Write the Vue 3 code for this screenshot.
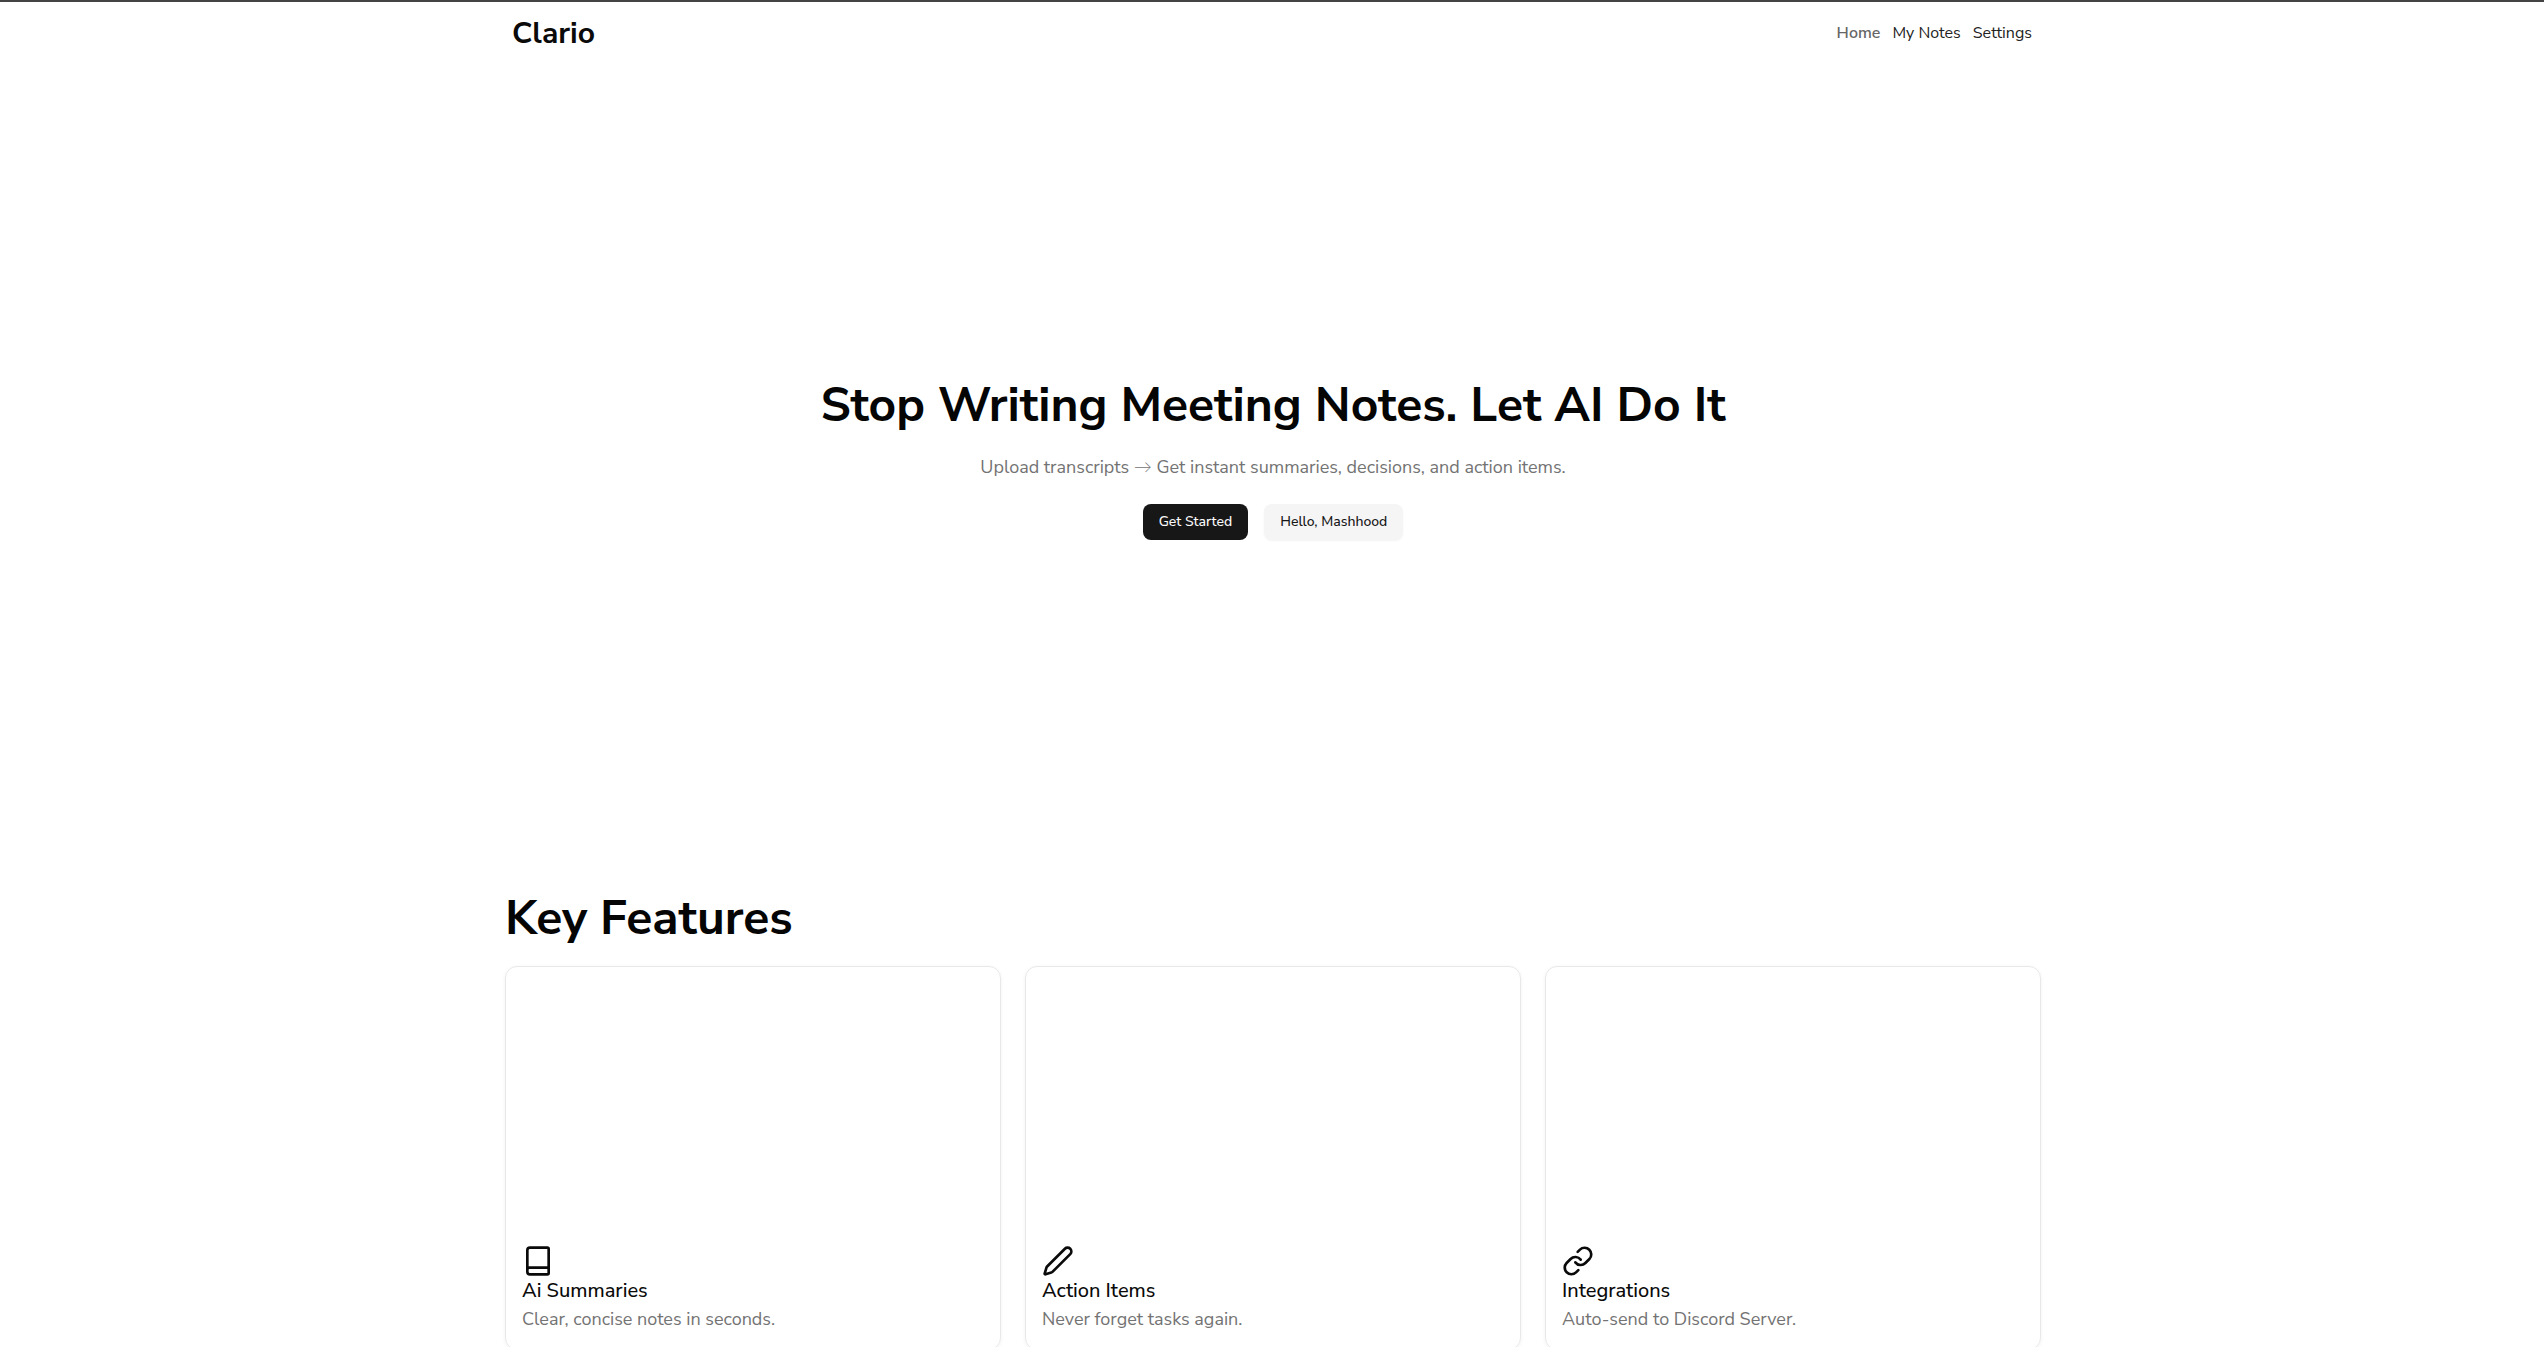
<template>
  <div class="page">
    <header class="topbar">
      <div class="topbar-inner">
        <div class="brand">Clario</div>
        <nav class="nav">
          <a v-for="link in links" :key="link.label" class="nav-link" :class="{ active: link.active }">{{ link.label }}</a>
        </nav>
      </div>
    </header>

    <section class="hero">
      <h1>Stop Writing Meeting Notes. Let AI Do It</h1>
      <p>Upload transcripts <span class="arrow">→</span> Get instant summaries, decisions, and action items.</p>
      <div class="hero-actions">
        <button class="btn primary">Get Started</button>
        <button class="btn secondary">Hello, Mashhood</button>
      </div>
    </section>

    <section class="features">
      <h2>Key Features</h2>
      <div class="feature-grid">
        <div v-for="f in features" :key="f.title" class="card">
          <svg class="card-icon" viewBox="0 0 24 24" fill="none" stroke="currentColor" stroke-width="2" stroke-linecap="round" stroke-linejoin="round">
            <path v-for="d in f.paths" :key="d" :d="d" />
          </svg>
          <h3>{{ f.title }}</h3>
          <p>{{ f.text }}</p>
        </div>
      </div>
    </section>
  </div>
</template>

<script setup>
const links = [
  { label: 'Home', active: true },
  { label: 'My Notes' },
  { label: 'Settings' },
];

const features = [
  {
    title: 'Ai Summaries',
    text: 'Clear, concise notes in seconds.',
    paths: ['M4 19V4a2 2 0 0 1 2-2h13a1 1 0 0 1 1 1v18a1 1 0 0 1-1 1H6a2 2 0 0 1-2-2v-1.5a1.5 1.5 0 0 1 1.5-1.5H20'],
  },
  {
    title: 'Action Items',
    text: 'Never forget tasks again.',
    paths: ['M21.174 6.812a1 1 0 0 0-3.986-3.987L3.842 16.174a2 2 0 0 0-.5.83l-1.321 4.352a.5.5 0 0 0 .623.622l4.353-1.32a2 2 0 0 0 .83-.497z'],
  },
  {
    title: 'Integrations',
    text: 'Auto-send to Discord Server.',
    paths: [
      'M10 13a5 5 0 0 0 7.54.54l3-3a5 5 0 0 0-7.07-7.07l-1.72 1.71',
      'M14 11a5 5 0 0 0-7.54-.54l-3 3a5 5 0 0 0 7.07 7.07l1.71-1.71',
    ],
  },
];
</script>

<style scoped>
.page {
  font-family: "Nunito Sans", Lato, "Noto Sans", sans-serif;
  color: #0d0d0d;
  background: #fff;
  padding-left: 2px;
}

.topbar {
  border-top: 2px solid #444;
  margin-left: -2px;
}

.topbar-inner {
  width: 1536px;
  margin: 0 auto;
  height: 62px;
  padding: 0 8px;
  box-sizing: border-box;
  display: flex;
  align-items: center;
  justify-content: space-between;
}

.brand {
  font-size: 30px;
  font-weight: 700;
  color: #0a0a0a;
}

.nav {
  display: flex;
  gap: 12px;
}

.nav-link {
  font-size: 16px;
  color: #222;
}

.nav-link.active {
  color: #666;
  font-weight: 600;
}

.hero {
  height: 784px;
  box-sizing: border-box;
  padding-top: 2px;
  display: flex;
  flex-direction: column;
  align-items: center;
  justify-content: center;
  text-align: center;
}

.hero h1 {
  margin: 0;
  font-size: 48px;
  line-height: 60px;
  font-weight: 700;
  color: #050505;
}

.hero p {
  margin: 18px 0 0;
  font-size: 18px;
  line-height: 28px;
  color: #737373;
}

.arrow {
  font-weight: 300;
}

.hero-actions {
  display: flex;
  gap: 16px;
  margin-top: 23px;
}

.btn {
  font: inherit;
  font-size: 14px;
  font-weight: 500;
  border: 0;
  border-radius: 8px;
  height: 36px;
  padding: 0 16px;
}

.btn.primary {
  background: #171717;
  color: #fafafa;
}

.btn.secondary {
  background: #f5f5f5;
  color: #171717;
  box-shadow: 0 1px 2px rgba(0, 0, 0, 0.05);
}

.features {
  width: 1536px;
  margin: 0 auto;
  padding-top: 46px;
}

.features h2 {
  margin: 0 0 24px;
  font-size: 48px;
  line-height: 48px;
  font-weight: 700;
  color: #050505;
}

.feature-grid {
  display: grid;
  grid-template-columns: repeat(3, 1fr);
  gap: 24px;
}

.card {
  height: 384px;
  box-sizing: border-box;
  padding: 16px;
  border: 1px solid #e8e8e8;
  border-radius: 12px;
  box-shadow: 0 1px 4px rgba(0, 0, 0, 0.05);
  display: flex;
  flex-direction: column;
  justify-content: flex-end;
}

.card-icon {
  width: 32px;
  height: 32px;
  color: #0a0a0a;
}

.card h3 {
  margin: 0;
  font-size: 20px;
  line-height: 28px;
  font-weight: 500;
  color: #0a0a0a;
}

.card p {
  margin: 0;
  font-size: 18px;
  line-height: 28px;
  color: #737373;
}
</style>

<style>
body {
  margin: 0;
  background: #fff;
}
</style>
